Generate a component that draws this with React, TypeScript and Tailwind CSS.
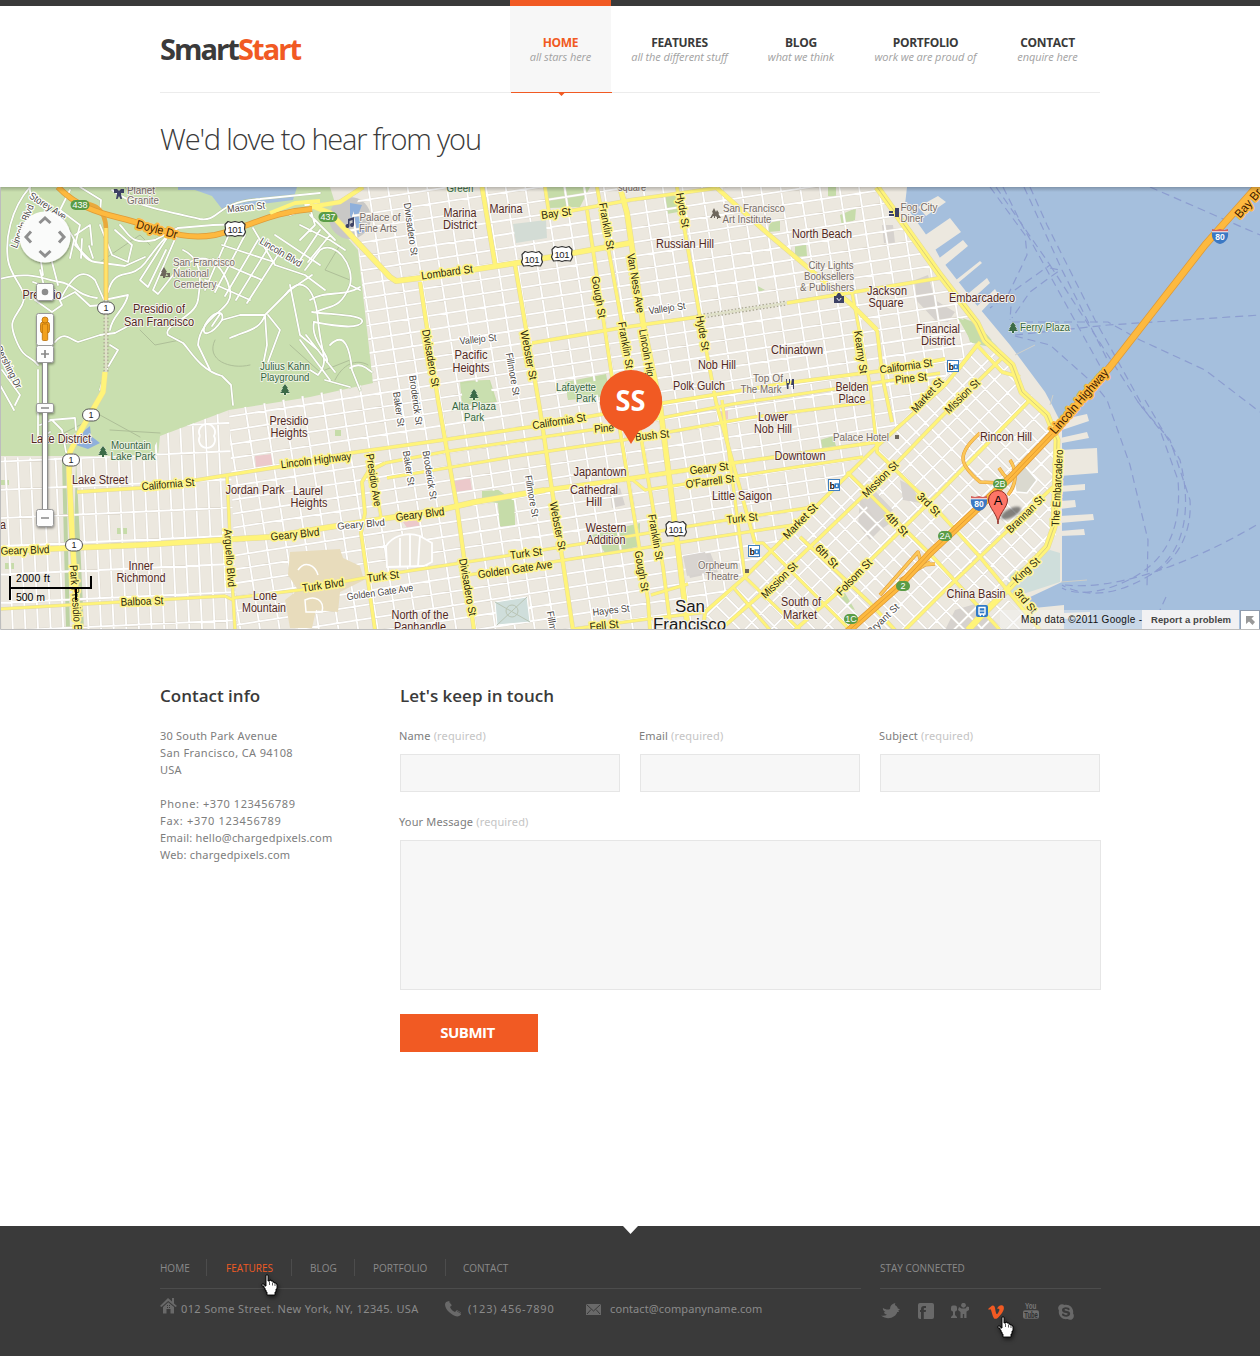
import type { ReactNode } from "react";
import { FaSkype, FaVimeoV } from "react-icons/fa";

const OPEN = "font-['Open_Sans',sans-serif]";
const LUCIDA = "font-['Noto_Sans','DejaVu_Sans',sans-serif]";

/* ---------------------------------------------------------------- map data */

const LAND = "#ece8df";
const PARK = "#c9dfaf";
const WATER = "#a5bfdd";
const YELLOW = "#fff479";

const richmond = "0,457 60,458 150,455 160,436 229,410 237,630 0,630";
const central =
  "363,187 877,187 940,272 985,335 975,349 873,450 745,577 705,612 703,630 237,630 229,410 373,383 358,245 345,235";
const soma = "980,342 992,340 1056,430 1056,540 1000,592 1040,630 703,630 705,612 745,577 873,450";

type Road = [width: number, points: string];

const yellowRoads: Road[] = [
  [4, "310,207 340,202 363,187"],
  [5, "310,205 330,213 390,277 396,281 420,278 523,262 630,243"],
  [4, "482,187 495,264"],
  [5, "620,187 627,213 643,323 660,405 672,500 688,630"],
  [3, "545,187 549,213 570,211 630,200 717,188"],
  [4, "717,188 767,233 852,305 877,330"],
  [3, "877,330 883,380 892,422"],
  [3, "677,187 700,317 716,402 755,543"],
  [3, "597,187 630,367 642,443 663,567 671,630"],
  [3, "587,210 612,377 622,443 648,600 650,630"],
  [3.5, "515,265 540,410 573,630"],
  [3.5, "420,282 438,400 457,507 474,630"],
  [3, "532,343 620,328 697,317"],
  [3, "787,303 940,278"],
  [3, "77,492 140,488 197,480 278,467 350,453 443,440 530,427 620,411 663,403 787,383 880,371 945,359"],
  [2.5, "385,463 443,452 630,424 733,404 940,373"],
  [2.5, "387,478 523,455 630,439 747,418 870,402"],
  [5, "0,551 140,545 270,537 330,527 440,510 475,502 545,490"],
  [4, "545,490 620,480 700,468"],
  [3, "700,468 877,442"],
  [2.5, "620,479 633,480 645,490 863,457"],
  [2.5, "233,598 300,590 363,578 480,560 630,536 727,520 813,507"],
  [2.5, "468,575 630,550 793,525"],
  [2.5, "227,475 231,560 235,630"],
  [3, "385,463 368,472 362,482 365,513 361,533 375,630"],
  [2.5, "370,453 382,523"],
  [5, "105,372 103,392 80,432 70,452 69,470 72,533 78,630"],
  [2.5, "0,609 120,602 225,596 233,600"],
  [2.5, "573,629 640,620 707,612"],
  [2.5, "651,595 688,584"],
  [3, "703,630 705,612 745,577 873,450 945,385 980,342"],
  [3, "720,630 760,595 887,473 943,415 1003,357"],
  [3, "795,630 837,593 940,492 1030,400"],
  [3, "1053,487 1005,533 940,595 905,630"],
  [3, "877,442 877,452 940,513 980,557 1040,630"],
  [3, "847,472 933,557 1000,630"],
  [3, "800,537 870,603 895,630"],
  [2.5, "755,543 763,543 850,630"],
  [2.5, "745,577 800,630"],
  [2.5, "733,587 770,630"],
  [2.5, "852,293 870,385 877,450"],
  [2.5, "722,400 745,577"],
  [3, "958,370 977,345 1002,372 1020,377"],
  [6, "877,187 940,275 977,323 985,340 1012,365 1022,392 1047,415 1057,440 1054,527 1047,547 1010,587 980,617 968,630"],
];

const presidioRoads = [
  "M0 279C30 270 45 280 60 282S75 295 97 298",
  "M30 187C28 205 50 207 64 224S80 260 95 262L125 266L145 257",
  "M80 187L101 200L100 214M112 190C130 205 170 212 200 219C220 222 215 202 260 199L320 193",
  "M30 187C10 210 5 240 8 260S30 290 22 305S8 320 16 340S30 355 38 365",
  "M40 270L45 290L60 300L75 292L90 306L103 305M40 255L43 275M52 262L58 285",
  "M33 282L55 290L62 305L52 312L35 300",
  "M60 300C75 270 85 270 95 280L104 300L128 295C125 310 112 315 110 330",
  "M108 292C115 265 130 282 145 263C155 250 165 235 178 228L213 225L250 224",
  "M55 342C65 330 70 340 78 342L100 335L115 333L130 325L135 325",
  "M170 233L140 280L148 287L166 250M178 232L153 290L158 294L185 260",
  "M183 250C205 260 200 285 198 300C195 318 162 325 168 335L183 343C190 350 200 370 222 376L231 385L233 405",
  "M190 262C210 250 225 270 230 290S200 315 198 345L210 370",
  "M230 232L205 290M245 235L215 292M258 240L225 296M270 245L236 300M281 250L247 303M213 259L262 280M222 245L274 262M205 280L250 300",
  "M253 228L275 265L305 275L325 290M275 235L320 265M265 315L240 315L222 320M265 315C260 330 248 330 230 338M265 315L267 345L262 370M268 315L280 330L268 362M265 315L290 290L312 275",
  "M285 295C300 275 315 285 318 320S330 360 318 375L310 370M290 285L300 335L318 350M300 340L330 380M306 335L335 372M325 380L350 387",
  "M305 270L320 250C335 240 355 265 350 285L360 290M310 300C325 290 345 297 360 287M312 312C335 315 365 315 362 322S340 327 314 322",
  "M314 322C310 340 330 355 327 362M350 285C340 310 330 305 316 312",
  "M330 345C345 330 350 350 352 370L360 390M350 368C362 360 370 372 372 372",
  "M0 355C15 360 5 375 18 385M2 370L20 395L15 405M0 385L14 410",
  "M110 345L118 350L105 372L100 390M38 370L38 440L50 432M40 425L52 420L62 430L66 452L76 455M50 420L75 418L76 430M70 190L60 210L80 225L75 245L90 260",
  "M75 235L90 225L92 245M74 240L70 258M82 239L81 258M89 246L93 258M100 225L112 255L128 262L132 245L115 230",
  "M120 225C130 235 130 245 155 240L178 228M290 215L310 208L315 225L300 240M300 225L330 240L345 250M310 215L335 240M320 230L300 260M330 235L308 262M305 205L330 203",
  "M205 325C200 338 212 335 222 320C225 308 212 312 205 325M212 326L220 314",
];

const ferryLines = [
  "M990 187L1025 235L1027 255L1008 295L990 308",
  "M996 187L1050 265L1012 292L1010 320",
  "M1003 187L1022 225L1105 375",
  "M1030 187L1047 225L1095 320L1145 410",
  "M1024 187L1062 270L1110 365",
  "M1050 265L1140 405L1170 440L1190 500C1192 530 1180 560 1150 575",
  "M1145 400L1180 460C1190 500 1190 550 1150 575S1080 595 1062 585",
  "M1138 402L1160 430L1178 480C1182 530 1165 555 1145 570S1085 600 1062 588",
  "M1012 322L1040 322L1108 322L1140 340L1205 370L1260 412",
  "M1015 335L1108 325L1260 315",
  "M1015 336L1050 345L1095 385L1107 400L1130 465L1148 540L1147 587",
  "M1150 187L1260 235",
  "M1065 585C1110 590 1180 570 1260 523",
  "M1166 597L1160 610",
  "M1050 268L1060 270L1030 292L1012 318",
];

/* ------------------------------------------------------------ map elements */

function StreetGrid({
  area,
  angle,
  origin,
  stepX,
  stepY,
}: {
  area: string;
  angle: number;
  origin: [number, number];
  stepX: number;
  stepY: number;
}) {
  const reach = 750;
  const columns = Math.ceil(reach / stepX);
  const rows = Math.ceil(reach / stepY);
  let d = "";
  for (let i = -columns; i <= columns; i++) d += `M${(i * stepX).toFixed(1)} ${-reach}V${reach}`;
  for (let i = -rows; i <= rows; i++) d += `M${-reach} ${(i * stepY).toFixed(1)}H${reach}`;
  return (
    <g clipPath={`url(#${area})`}>
      <g transform={`translate(${origin[0]} ${origin[1]}) rotate(${angle})`} fill="none">
        <path d={d} stroke="#dfdad0" strokeWidth="2.7" />
        <path d={d} stroke="#fff" strokeWidth="1.8" />
      </g>
    </g>
  );
}

type LabelKind = "place" | "poi" | "park" | "road" | "minor" | "bridge";

const labelStyle: Record<LabelKind, { fill: string; halo: string; size: number; haloWidth: number }> = {
  place: { fill: "#52291f", halo: "#f6f3ee", size: 12, haloWidth: 2 },
  poi: { fill: "#766c66", halo: "#f6f3ee", size: 11, haloWidth: 2 },
  park: { fill: "#34643f", halo: "#eef3e4", size: 11, haloWidth: 2 },
  road: { fill: "#2b2608", halo: "#fff58c", size: 11, haloWidth: 3.5 },
  minor: { fill: "#4a4643", halo: "#ffffff", size: 10, haloWidth: 2.5 },
  bridge: { fill: "#3d1a00", halo: "#fdb93f", size: 12, haloWidth: 4 },
};

/* kind, text, centre x, centre y, drawn length, rotation */
type LabelRow = [LabelKind, string, number, number, number, number?];

const labels: LabelRow[] = [
  ["minor", "Storey Ave", 48, 206, 42, 33],
  ["minor", "Lincoln Blvd", 22, 226, 46, -68],
  ["bridge", "Doyle Dr", 157, 229, 42, 15],
  ["minor", "Mason St", 246, 207, 38, -6],
  ["minor", "Lincoln Blvd", 281, 252, 47, 31],
  ["minor", "Pershing Dr", 9, 367, 46, 63],
  ["poi", "Planet", 141, 190, 28],
  ["poi", "Granite", 143, 200, 32],
  ["poi", "San Francisco", 204, 262, 62],
  ["poi", "National", 191, 273, 36],
  ["poi", "Cemetery", 195, 284, 43],
  ["place", "Presidio", 42, 295, 39],
  ["place", "Presidio of", 159, 309, 52],
  ["place", "San Francisco", 159, 322, 70],
  ["park", "Julius Kahn", 285, 366, 50],
  ["park", "Playground", 285, 377, 49],
  ["poi", "Palace of", 380, 217, 41],
  ["poi", "Fine Arts", 378, 228, 38],
  ["minor", "Divisadero St", 411, 229, 53, 82],
  ["park", "Green", 460, 188, 27],
  ["place", "Marina", 460, 213, 33],
  ["place", "District", 460, 225, 34],
  ["place", "Marina", 506, 209, 33],
  ["road", "Bay St", 556, 213, 30, -8],
  ["road", "Lombard St", 447, 272, 52, -8],
  ["road", "Franklin St", 607, 226, 47, 80],
  ["road", "Gough St", 599, 297, 42, 80],
  ["road", "Franklin St", 626, 345, 47, 80],
  ["road", "Divisadero St", 431, 358, 58, 80],
  ["road", "Webster St", 529, 355, 50, 79],
  ["minor", "Vallejo St", 478, 339, 37, -6],
  ["minor", "Fillmore St", 513, 374, 43, 80],
  ["minor", "Broderick St", 416, 400, 50, 82],
  ["minor", "Baker St", 399, 409, 35, 82],
  ["place", "Pacific", 471, 355, 33],
  ["place", "Heights", 471, 368, 37],
  ["park", "Alta Plaza", 474, 406, 44],
  ["park", "Park", 474, 417, 20],
  ["park", "Lafayette", 576, 387, 40],
  ["park", "Park", 586, 398, 20],
  ["poi", "square", 632, 187, 28],
  ["road", "Hyde St", 683, 210, 35, 80],
  ["poi", "San Francisco", 754, 208, 62],
  ["poi", "Art Institute", 747, 219, 49],
  ["place", "Russian Hill", 685, 244, 58],
  ["place", "North Beach", 822, 234, 60],
  ["poi", "City Lights", 831, 265, 45],
  ["poi", "Booksellers", 829, 276, 50],
  ["poi", "& Publishers", 827, 287, 54],
  ["place", "Jackson", 887, 291, 40],
  ["place", "Square", 886, 303, 35],
  ["road", "Van Ness Ave", 636, 283, 60, 80],
  ["minor", "Vallejo St", 667, 308, 37, -8],
  ["road", "Lincoln Hig", 647, 353, 48, 80],
  ["road", "Hyde St", 703, 333, 35, 80],
  ["place", "Chinatown", 797, 350, 52],
  ["place", "Nob Hill", 717, 365, 38],
  ["place", "Polk Gulch", 699, 386, 52],
  ["poi", "Top Of", 768, 378, 30],
  ["poi", "The Mark", 761, 389, 41],
  ["road", "Kearny St", 861, 352, 43, 82],
  ["place", "Belden", 852, 387, 33],
  ["place", "Place", 852, 399, 27],
  ["place", "Financial", 938, 329, 44],
  ["place", "District", 938, 341, 34],
  ["road", "California St", 906, 366, 53, -8],
  ["road", "Pine St", 911, 378, 32, -6],
  ["road", "Market St", 927, 395, 42, -48],
  ["road", "Mission St", 962, 396, 44, -44],
  ["poi", "Fog City", 919, 207, 37],
  ["poi", "Diner", 912, 218, 23],
  ["place", "Embarcadero", 982, 298, 66],
  ["park", "Ferry Plaza", 1045, 327, 50],
  ["bridge", "Bay Br", 1248, 203, 34, -49],
  ["bridge", "Lincoln Highway", 1079, 401, 82, -49],
  ["place", "Lake District", 61, 439, 60],
  ["park", "Mountain", 131, 445, 40],
  ["park", "Lake Park", 133, 456, 45],
  ["place", "Lake Street", 100, 480, 56],
  ["road", "California St", 168, 484, 53, -5],
  ["place", "Presidio", 289, 421, 39],
  ["place", "Heights", 289, 433, 37],
  ["road", "Lincoln Highway", 316, 460, 71, -7],
  ["place", "Jordan Park", 255, 490, 59],
  ["place", "Laurel", 308, 491, 30],
  ["place", "Heights", 309, 503, 37],
  ["place", "a", 3, 525, 6],
  ["road", "Geary Blvd", 25, 550, 49, -2],
  ["road", "Geary Blvd", 295, 534, 49, -6],
  ["road", "Arguello Blvd", 230, 558, 58, 86],
  ["road", "Park Presidio B", 76, 598, 66, 86],
  ["place", "Inner", 141, 566, 25],
  ["place", "Richmond", 141, 578, 49],
  ["road", "Balboa St", 142, 601, 43, -2],
  ["place", "Lone", 265, 596, 24],
  ["place", "Mountain", 264, 608, 44],
  ["road", "Turk Blvd", 323, 585, 42, -8],
  ["road", "Turk St", 383, 576, 32, -7],
  ["minor", "Golden Gate Ave", 380, 592, 67, -8],
  ["place", "North of the", 420, 615, 57],
  ["place", "Panhandle", 420, 627, 52],
  ["road", "Presidio Ave", 374, 480, 53, 81],
  ["minor", "Baker St", 409, 468, 35, 81],
  ["minor", "Broderick St", 430, 475, 49, 81],
  ["minor", "Geary Blvd", 361, 524, 48, -5],
  ["road", "Geary Blvd", 420, 514, 49, -7],
  ["road", "Divisadero St", 468, 587, 58, 80],
  ["minor", "Fillmore St", 532, 496, 42, 80],
  ["road", "Webster St", 558, 526, 49, 79],
  ["road", "California St", 559, 421, 54, -9],
  ["road", "Pine", 604, 428, 20, -5],
  ["place", "Japantown", 600, 472, 53],
  ["place", "Cathedral", 594, 490, 48],
  ["place", "Hill", 594, 502, 16],
  ["place", "Western", 606, 528, 41],
  ["place", "Addition", 606, 540, 39],
  ["road", "Turk St", 526, 553, 32, -7],
  ["road", "Golden Gate Ave", 515, 569, 75, -8],
  ["minor", "Hayes St", 611, 610, 37, -7],
  ["road", "Fell St", 604, 625, 29, -6],
  ["minor", "Fillm", 552, 621, 20, 80],
  ["road", "Bush St", 652, 435, 34, -6],
  ["place", "Lower", 773, 417, 30],
  ["place", "Nob Hill", 773, 429, 38],
  ["poi", "Palace Hotel", 861, 437, 56],
  ["place", "Downtown", 800, 456, 51],
  ["road", "Geary St", 709, 468, 39, -7],
  ["road", "O'Farrell St", 710, 481, 49, -7],
  ["place", "Little Saigon", 742, 496, 60],
  ["road", "Turk St", 742, 518, 31, -6],
  ["road", "Franklin St", 656, 537, 46, 80],
  ["road", "Gough St", 642, 571, 41, 80],
  ["road", "Market St", 800, 521, 44, -46],
  ["road", "Mission St", 880, 479, 46, -45],
  ["road", "Mission St", 779, 580, 46, -45],
  ["road", "3rd St", 929, 504, 28, 45],
  ["road", "4th St", 897, 524, 28, 46],
  ["road", "6th St", 827, 556, 28, 46],
  ["road", "Folsom St", 854, 577, 46, -46],
  ["poi", "Orpheum", 718, 565, 40],
  ["poi", "Theatre", 722, 576, 33],
  ["place", "South of", 801, 602, 40],
  ["place", "Market", 800, 615, 34],
  ["minor", "Bryant St", 883, 619, 40, -44],
  ["road", "Brannan St", 1025, 514, 48, -45],
  ["road", "The Embarcadero", 1057, 488, 77, -87],
  ["road", "King St", 1026, 570, 32, -43],
  ["road", "3rd St", 1026, 601, 28, 50],
  ["place", "Rincon Hill", 1006, 437, 52],
  ["place", "China Basin", 976, 594, 59],
];

function MapLabel({ row }: { row: LabelRow }) {
  const [kind, text, x, y, length, angle = 0] = row;
  const style = labelStyle[kind];
  return (
    <text
      transform={`translate(${x} ${y}) rotate(${angle})`}
      dy={style.size * 0.36}
      textAnchor="middle"
      textLength={length}
      lengthAdjust="spacingAndGlyphs"
      fontSize={style.size}
      fill={style.fill}
      stroke={style.halo}
      strokeWidth={style.haloWidth}
      strokeLinejoin="round"
      paintOrder="stroke"
    >
      {text}
    </text>
  );
}

function TreeIcon({ x, y }: { x: number; y: number }) {
  return (
    <path
      transform={`translate(${x} ${y})`}
      d="M0-5L3-1H2L4 2H3L5 4H1V6H-1V4H-5L-3 2H-4L-2-1H-3Z"
      fill="#3c6b48"
      stroke="#eef3e4"
      strokeWidth="1"
      paintOrder="stroke"
    />
  );
}

function UsShield({ x, y }: { x: number; y: number }) {
  return (
    <g transform={`translate(${x} ${y})`}>
      <path
        d="M-7-7.500L-4-6.500L0-7.500L4-6.500L7-7.500L10-4.500L9.500 0L10.500 3L8.500 7L3 6.500L0 7.500L-3 6.500L-8.500 7L-10.500 3L-9.500 0L-10-4.500Z"
        fill="#fff"
        stroke="#333"
        strokeWidth="1.2"
        strokeLinejoin="round"
      />
      <text y="3.500" textAnchor="middle" fontSize="9.500" textLength="15" fill="#222">
        101
      </text>
    </g>
  );
}

function RouteOne({ x, y }: { x: number; y: number }) {
  return (
    <g transform={`translate(${x} ${y})`}>
      <rect x="-8.500" y="-6" width="17" height="12" rx="6" fill="#fff" stroke="#555" strokeWidth="1" />
      <text y="3.300" textAnchor="middle" fontSize="9" fill="#222">
        1
      </text>
    </g>
  );
}

function ExitBadge({ x, y, text }: { x: number; y: number; text: string }) {
  const half = text.length > 2 ? 9.5 : 7;
  return (
    <g transform={`translate(${x} ${y})`}>
      <rect x={-half} y="-5" width={half * 2} height="10" rx="5" fill="#5a9c46" />
      <text y="3.200" textAnchor="middle" fontSize="9" fill="#fff">
        {text}
      </text>
    </g>
  );
}

function InterstateShield({ x, y }: { x: number; y: number }) {
  return (
    <g transform={`translate(${x} ${y})`}>
      <path d="M-8-7L-4-6L0-7L4-6L8-7V-3H-8Z" fill="#d4605c" />
      <path d="M-8-4H8C9 3 5 7 0 8C-5 7-9 3-8-4Z" fill="#3b78c3" />
      <path d="M-8-4.200H8" stroke="#fff" strokeWidth="1" />
      <text y="4" textAnchor="middle" fontSize="8.500" fontWeight="bold" fill="#fff">
        80
      </text>
    </g>
  );
}

function TransitBadge({ x, y }: { x: number; y: number }) {
  return (
    <g transform={`translate(${x} ${y})`}>
      <rect x="-5.500" y="-5.500" width="11" height="11" fill="#fff" stroke="#3f7fc0" />
      <text x="-4.500" y="3.500" fontSize="9" fontWeight="bold" fill="#111">
        b
      </text>
      <rect x="1.300" y="-1" width="3" height="3.600" fill="none" stroke="#2f7cc4" strokeWidth="1.400" />
    </g>
  );
}

function MapControls() {
  return (
    <g>
      <g filter="url(#controlShadow)">
        <circle cx="45" cy="237" r="25.500" fill="#fff" fillOpacity=".94" />
        <rect x="42.500" y="360" width="5" height="152" fill="#fff" stroke="#8d8d8d" strokeWidth="1" />
        <rect x="36.500" y="283.500" width="17" height="17" rx="2" fill="#fdfdfd" stroke="#999" />
        <rect x="36.500" y="313.500" width="17" height="32" rx="2" fill="#fdfdfd" stroke="#999" />
        <rect x="36.500" y="345.500" width="17" height="17" rx="2" fill="#fdfdfd" stroke="#999" />
        <rect x="36.500" y="403.500" width="17" height="9" rx="1.500" fill="#fdfdfd" stroke="#999" />
        <rect x="36.500" y="509.500" width="17" height="17" rx="2" fill="#fdfdfd" stroke="#999" />
      </g>
      <path
        d="M39.500 223L45 218L50.500 223M39.500 251L45 256L50.500 251M31 231.500L26 237L31 242.500M59 231.500L64 237L59 242.500"
        fill="none"
        stroke="#8f8f8f"
        strokeWidth="3"
      />
      <circle cx="45" cy="292" r="3.300" fill="#8d8d8d" />
      <path d="M41 354H49M45 350V358M41 408H49M41 518H49" stroke="#888" strokeWidth="1.700" />
      <g fill="#f2a11d" stroke="#b86f08" strokeWidth=".8">
        <rect x="40.500" y="322" width="9" height="11" rx="2.500" />
        <rect x="42.300" y="324" width="5.400" height="16.500" rx="1" />
        <circle cx="45" cy="320" r="3" />
      </g>
    </g>
  );
}

function MapMarkers() {
  return (
    <g>
      <ellipse cx="1011" cy="513" rx="11" ry="4.500" transform="rotate(-27 1011 513)" fill="#3a3a3a" opacity=".6" filter="url(#soft)" />
      <path
        d="M998 524C998 514 988.500 508 988.500 500A9.500 9.500 0 0 1 1007.500 500C1007.500 508 998 514 998 524Z"
        fill="#fd7567"
        stroke="#8e2c23"
        strokeWidth="1"
      />
      <text x="998" y="505" textAnchor="middle" fontSize="13" fill="#000">
        A
      </text>
      <path d="M631 370A31 31 0 0 1 639 431L631 444L623 431A31 31 0 0 1 631 370Z" fill="#f15a23" />
      <text
        x="630.500"
        y="411"
        textAnchor="middle"
        textLength="30"
        lengthAdjust="spacingAndGlyphs"
        fontSize="29"
        fontWeight="bold"
        fill="#fff"
        className="font-['Open_Sans',sans-serif]"
      >
        SS
      </text>
    </g>
  );
}

function CityMap() {
  return (
    <svg
      viewBox="0 187 1260 443"
      width="1260"
      height="443"
      className="block font-['Liberation_Sans',Arial,sans-serif]"
      role="img"
      aria-label="Map of San Francisco"
    >
      <defs>
        <clipPath id="richmond">
          <polygon points={richmond} />
        </clipPath>
        <clipPath id="central">
          <polygon points={central} />
        </clipPath>
        <clipPath id="soma">
          <polygon points={soma} />
        </clipPath>
        <filter id="controlShadow" x="-50%" y="-20%" width="200%" height="140%">
          <feDropShadow dx="0.5" dy="1.500" stdDeviation="1.200" floodOpacity=".4" />
        </filter>
        <filter id="soft">
          <feGaussianBlur stdDeviation="1.200" />
        </filter>
        <linearGradient id="topShade" x1="0" x2="0" y1="0" y2="1">
          <stop offset="0" stopColor="#000" stopOpacity=".22" />
          <stop offset="1" stopColor="#000" stopOpacity="0" />
        </linearGradient>
      </defs>

      <rect y="187" width="1260" height="443" fill={WATER} />

      {/* mainland and piers */}
      <path
        d="M0 187H907L905 205L932 243L940 258L975 303L1010 345L1045 392L1052 405L1062 425V582L1028 598L1034 608L1064 605V630H0Z"
        fill={LAND}
      />
      <path
        d="M918 207L938 196L946 202L926 216ZM918 240L950 218L961 232L932 252ZM938 259L963 240L968 246L944 266ZM956 280L980 261L982 263L958 283ZM964 297L987 278L990 283L969 302ZM973 310L995 289L998 294L978 315Z"
        fill={LAND}
      />
      <path
        d="M1060 420L1087 414L1089 421L1062 430ZM1060 438L1087 432L1089 438L1062 443ZM1060 450L1097 448L1098 473L1060 476ZM1060 486L1085 484V490L1060 492ZM1060 501L1075 500L1076 507L1060 509ZM1060 516L1093 514L1094 520L1060 523ZM1060 531L1084 529L1085 535L1060 536ZM1064 613L1090 612V617L1064 619Z"
        fill={LAND}
      />
      <path d="M1061 582L1087 580M1050 405L1053 395M1015 355L1035 345" stroke="#cfcfc8" strokeWidth="1" />

      {/* parks */}
      <path d="M0 187H330L345 235L358 250L373 383L310 397L229 410L160 436L158 456H60L0 456Z" fill={PARK} />
      <path d="M178 187H297L293 200L222 209L212 196L195 190H178Z" fill={WATER} />
      <path d="M90 426L91 436L100 443L88 449L76 445L80 434Z" fill="#8fb0db" />
      <circle cx="350" cy="218" r="21" fill="#c9c8c6" />
      <path d="M350 203L362 205L358 215L364 232L358 234L350 215Z" fill="#8fb0db" />
      <path
        d="M545 187H590L580 207L549 208ZM460 381L490 380L497 402L462 405ZM565 382L606 374L610 396L568 400ZM482 491L498 490L514 500L515 525L500 527L498 500L482 502ZM592 535L640 523V546L606 554ZM665 195L677 194L678 212L667 214ZM770 222L780 220V231L768 232ZM795 246L806 243L807 256L795 257ZM840 215L856 208L855 220L842 226ZM828 187H836V196H828ZM756 285L765 290L756 293ZM820 440L833 436L836 446L822 448ZM963 318L978 324L1000 350L987 345L970 342ZM852 384L868 383V392H852ZM838 595L845 593L855 610L848 608ZM0 480H9V485H0ZM5 563H14V569H5ZM117 528H127V534H117ZM335 430H341V436H335Z"
        fill="#c6dca9"
      />
      <path d="M62 460L66 460L70 630H66ZM76 460L80 540L84 630H81L74 540Z" fill="#bdd3a4" />
      <path d="M1010 575L1050 550L1060 553L1060 582L1020 595L1005 590Z" fill="#cfdedb" />
      <path d="M454 481L470 478L472 490L456 492ZM403 522L418 519L422 527L408 529ZM255 456L272 454L273 466L256 467ZM717 412L728 410V419L719 421Z" fill="#ecc9cb" />
      <path d="M860 500L872 497L895 520L880 530L870 540L858 525ZM683 556L710 552L718 572L690 578ZM915 280L928 275L935 300L955 312L948 322L935 320L916 300ZM610 492L620 488L625 505L612 508ZM955 610L975 604L1000 630H945ZM882 225H893L895 243H884Z" fill="#d6d2ce" />

      <StreetGrid area="richmond" angle={-2.6} origin={[72, 543]} stepX={12.6} stepY={28.2} />
      <StreetGrid area="central" angle={-8.8} origin={[457, 507]} stepX={19.4} stepY={13.8} />
      <StreetGrid area="soma" angle={-45} origin={[875, 447]} stepX={13.2} stepY={18.5} />

      {/* blocks that interrupt the street grid */}
      <path d="M484 492L498 490L514 501L515 525L500 526L498 503L484 502Z" fill="#c6dca9" />
      <path d="M461 384L489 380L494 401L463 404ZM566 386L606 379L609 393L568 399Z" fill={PARK} />
      <path d="M513 224L546 220L547 238L516 243Z" fill="#d3dcd5" />
      <path d="M495 602L527 597L530 622L497 625Z" fill="#cfdedb" stroke="#fff" />
      <path d="M495 602L530 622M527 597L497 625" stroke="#b9c4b4" />
      <circle cx="512" cy="611" r="6" fill="none" stroke="#b9c4b4" />
      <path d="M290 552L340 549L343 558L360 566L364 580L340 592L338 612L316 610L312 628H290L285 600L298 590L288 575Z" fill="#e8dcbc" />
      <path d="M298 570C305 560 315 565 318 575M305 600C315 595 325 600 322 612H306Z" fill="none" stroke="#fff" strokeWidth="1.500" />
      <path d="M862 500L876 492L893 510L878 522ZM900 480L913 487L920 503L903 500ZM683 556L705 552L712 572L687 576Z" fill="#d8d4d0" />
      <path d="M1012 473L1025 466L1037 480L1027 493L1016 492Z" fill="#dad9cf" stroke="#fff" strokeWidth="1.500" />
      <path d="M958 318L978 325L1000 350L990 347L972 343Z" fill="#c6dca9" />
      <path
        d="M386 546C392 537 405 531 420 536L432 543V562L424 566L387 567ZM400 538V566M410 534V566M420 536L418 566"
        fill={LAND}
        stroke="#fff"
        strokeWidth="1.800"
      />
      <path d="M200 436A8 8 0 1 1 214 436A8 8 0 1 1 200 436" fill="none" stroke="#fff" strokeWidth="1.800" />

      {/* park roads */}
      <g fill="none" strokeLinecap="round" strokeLinejoin="round">
        <path d="M125 187L140 205M100 262L140 235L150 245M140 330L155 345L180 340M215 340C205 360 230 370 250 365M290 345L320 372L350 360M60 435L100 415L140 437M110 430L160 433M340 245L325 270L350 280M335 380C345 360 360 360 368 365" stroke="#aebf98" strokeWidth="1" />
        {presidioRoads.map((d) => (
          <path key={d} d={d} stroke="#b3c49c" strokeWidth="2.700" />
        ))}
        {presidioRoads.map((d) => (
          <path key={d} d={d} stroke="#fff" strokeWidth="1.800" />
        ))}
        <path d="M106 300V372M697 317L787 303" stroke="#a9a690" strokeWidth="5" strokeDasharray="1.500 2" strokeLinecap="butt" />
        <path d="M106 300V372M697 317L787 303" stroke="#dfe0c8" strokeWidth="2.500" strokeLinecap="butt" />
      </g>

      {/* ferry routes */}
      <g fill="none" stroke="#8c9dd0" strokeWidth="1.200" strokeDasharray="8 5">
        {ferryLines.map((d) => (
          <path key={d} d={d} />
        ))}
      </g>

      {/* arterial roads */}
      <g fill="none" strokeLinejoin="round">
        {yellowRoads.map(([width, points]) => (
          <polyline key={points} points={points} stroke="#e2d9a0" strokeWidth={width + 1} />
        ))}
        {yellowRoads.map(([width, points]) => (
          <polyline key={points} points={points} stroke={YELLOW} strokeWidth={width} />
        ))}
        <polyline points="877,187 940,275 977,323 985,340 1012,365 1022,392 1047,415 1057,440 1054,527 1047,547 1010,587" stroke="#d9cf7a" strokeWidth="1" />
      </g>

      {/* freeways */}
      <g fill="none" strokeLinejoin="round">
        <path d="M106 300V230C106 205 90 203 75 202" stroke="#e9a93c" strokeWidth="4.500" />
        <path d="M106 300V228" stroke="#ffe36b" strokeWidth="3.500" />
        <path d="M58 187C75 205 95 212 120 218C160 228 180 241 215 235C250 227 270 212 312 209" stroke="#df9a36" strokeWidth="6" />
        <path d="M58 187C75 205 95 212 120 218C160 228 180 241 215 235C250 227 270 212 312 209" stroke="#fdb93f" strokeWidth="4.500" />
        <path d="M270 213L295 203L320 201" stroke={YELLOW} strokeWidth="4" />
        <path d="M980 433C955 455 960 465 980 482L1000 483M999 468C1005 478 1010 480 1010 482M1010 460C1018 472 1016 485 1008 495M880 595L918 552L922 565L935 564M930 562L900 580" stroke="#df9a36" strokeWidth="3.500" />
        <path d="M980 433C955 455 960 465 980 482L1000 483M999 468C1005 478 1010 480 1010 482M1010 460C1018 472 1016 485 1008 495M880 595L918 552L922 565L935 564M930 562L900 580" stroke="#fdc757" strokeWidth="2.500" />
        <path d="M1260 183L1205 245L1110 367L1053 433L1010 478L930 553L900 585L845 634" stroke="#df9a36" strokeWidth="7.500" />
        <path d="M1260 183L1205 245L1110 367L1053 433L1010 478L930 553L900 585L845 634" stroke="#fdb93f" strokeWidth="6" />
        <path d="M1053 433L1010 478L930 553L900 585L845 634" stroke="#e39d33" strokeWidth="1" />
      </g>

      {labels.map((row, i) => (
        <MapLabel key={i} row={row} />
      ))}

      <g fill="#1b1b1b" stroke="#f6f3ee" strokeWidth="2.500" paintOrder="stroke" fontSize="16">
        <text x="675" y="612" textLength="30" lengthAdjust="spacingAndGlyphs">
          San
        </text>
        <text x="653" y="630" textLength="73" lengthAdjust="spacingAndGlyphs">
          Francisco
        </text>
      </g>

      {/* places of interest */}
      <TreeIcon x={285} y={389} />
      <TreeIcon x={103} y={451} />
      <TreeIcon x={474} y={394} />
      <TreeIcon x={1013} y={327} />
      <g fill="#6d665c">
        <path d="M164 267L167 272H166L168 276H165V278H163V276H160L162 272H161ZM165 277H170V273H167Z" />
        <path d="M714 208L716 212L717 210L719 213L718.500 214L721 218H718V219H717V217L715 216V218H714V216L712 217V218H710L713 213L712 212Z" />
        <rect x="895" y="435" width="4" height="4" />
        <rect x="745" y="569" width="4" height="4" />
      </g>
      <g fill="#3d4265">
        <path d="M889 211H893V213H889ZM889 214H894V216H889ZM895 208H899V217H895ZM786 379H787V383H789V379H790V383L788.500 385V389H787ZM792 379H794V389H793V385H791Z" />
        <path d="M834 296H836L838 293H840L842 296H844V303H834Z" />
        <path d="M837 298C838 301 840 301 841 298" fill="none" stroke="#fff" strokeWidth="1" />
        <path d="M348 219L354 217V225A2 2 0 1 1 352.500 223V220L349.500 221V226A2 2 0 1 1 348 224Z" />
        <path d="M114 189H117L119 191L121 189H124V193H121V194L122 199H120.500L119 196L117.500 199H116L117 194V193H114Z" />
      </g>
      <UsShield x={235} y={229} />
      <UsShield x={532} y={259} />
      <UsShield x={562} y={254} />
      <UsShield x={676} y={529} />
      <RouteOne x={106} y={308} />
      <RouteOne x={91} y={415} />
      <RouteOne x={71} y={460} />
      <RouteOne x={74} y={545} />
      <ExitBadge x={80} y={205} text="438" />
      <ExitBadge x={328} y={217} text="437" />
      <ExitBadge x={1000} y={484} text="2B" />
      <ExitBadge x={945} y={536} text="2A" />
      <ExitBadge x={903} y={586} text="2" />
      <ExitBadge x={851} y={619} text="1C" />
      <InterstateShield x={1220} y={236} />
      <InterstateShield x={979} y={503} />
      <TransitBadge x={953} y={366} />
      <TransitBadge x={834} y={485} />
      <TransitBadge x={754} y={551} />
      <rect x="976" y="605" width="12" height="12" rx="2" fill="#2f79c6" />
      <path d="M979 607.500H985V614H979ZM980 616L981 614M984 616L983 614" fill="none" stroke="#fff" strokeWidth="1.400" />
      <path d="M979.500 611H984.500" stroke="#fff" strokeWidth="1" />

      <MapControls />

      {/* scale bar */}
      <path d="M10 576V600M9 588H92M91 576V588M76 588V600" stroke="#000" strokeWidth="2" fill="none" />
      <g fontSize="10.500" fill="#000">
        <text x="16" y="582" textLength="34">
          2000 ft
        </text>
        <text x="16" y="601" textLength="29">
          500 m
        </text>
      </g>

      {/* attribution */}
      <rect x="1000" y="610" width="142" height="20" fill="#f3f3f3" opacity=".45" />
      <rect x="1142" y="610" width="97" height="20" fill="#f1f1f3" />
      <text x="1021" y="623" fontSize="10" textLength="121" fill="#111">
        Map data ©2011 Google -
      </text>
      <text x="1151" y="623" fontSize="9.500" fontWeight="bold" textLength="80" fill="#444">
        Report a problem
      </text>
      <rect x="1240.500" y="610.500" width="19" height="19" fill="#fff" stroke="#8f9cae" />
      <path d="M1246 616H1254L1251.500 618.500L1255 622L1252.500 625L1249 621.500L1246 624Z" fill="#999" />

      <MapMarkers />

      <rect y="187" width="1260" height="5" fill="url(#topShade)" />
      <path d="M.5 187V629.500H1260" fill="none" stroke="#bdbdbd" />
    </svg>
  );
}

/* ------------------------------------------------------------------ header */

const navItems = [
  { title: "HOME", note: "all stars here", box: "w-[101px]", active: true },
  { title: "FEATURES", note: "all the different stuff", box: "w-[137px]" },
  { title: "BLOG", note: "what we think", box: "w-[106px]" },
  { title: "PORTFOLIO", note: "work we are proud of", box: "w-[143px]" },
  { title: "CONTACT", note: "enquire here", box: "w-[101px]" },
];

function Header() {
  return (
    <header className="border-t-[6px] border-[#3a3a3a]">
      <div className="mx-auto flex h-[87px] w-[940px] border-b border-[#ececec]">
        <div className="w-[350px] pt-[22px] text-[29px] leading-[42px] font-bold tracking-[-1.95px] text-[#3a3a3a]">
          Smart<span className="text-[#f15a23]">Start</span>
        </div>
        <nav className="flex">
          {navItems.map((item) => (
            <a
              key={item.title}
              className={`relative -mt-[6px] h-[92px] pt-[36px] text-center whitespace-nowrap ${item.box} ${
                item.active ? "border-t-[6px] border-[#f15a23] bg-[#f7f7f7] pt-[30px]!" : ""
              }`}
            >
              <span
                className={`block text-[12px] leading-[14px] font-bold tracking-[-0.3px] ${
                  item.active ? "text-[#f15a23]" : "text-[#3a3a3a]"
                }`}
              >
                {item.title}
              </span>
              <span className="block text-[11px] leading-[14px] tracking-[-0.1px] text-[#a2a2a2] italic">{item.note}</span>
              {item.active && (
                <svg width="101" height="5" viewBox="0 0 101 5" className="absolute top-[86px] left-px" fill="#f15a23">
                  <path d="M0 0H101V1H53.500L50.500 4L47.500 1H0Z" />
                </svg>
              )}
            </a>
          ))}
        </nav>
      </div>
      <h1 className="mx-auto h-[94px] w-[940px] pt-[25px] text-[29px] leading-[42px] font-light tracking-[-1.18px] text-[#3a3a3a]">
        We'd love to hear from you
      </h1>
    </header>
  );
}

/* ----------------------------------------------------------------- content */

function FieldLabel({ children }: { children: ReactNode }) {
  return (
    <span className={`-ml-px block text-[11px] leading-[17px] tracking-[0.15px] text-[#7d7d7d] ${LUCIDA}`}>
      {children} <span className="text-[#c4c4c4]">(required)</span>
    </span>
  );
}

function ContactSection() {
  return (
    <main className="mx-auto flex h-[596px] w-[940px] pt-[54px]">
      <section className="w-[240px] shrink-0">
        <h2 className="text-[17px] leading-6 font-semibold text-[#3a3a3a]">Contact info</h2>
        <address className={`mt-[19px] text-[11px] leading-[17px] text-[#7d7d7d] not-italic ${LUCIDA}`}>
          <p className="tracking-[0.2px]">30 South Park Avenue</p>
          <p className="tracking-[0.38px]">San Francisco, CA 94108</p>
          <p className="tracking-[0.2px]">USA</p>
          <p className="mt-[17px] tracking-[0.57px]">Phone: +370 123456789</p>
          <p className="tracking-[0.7px]">Fax: +370 123456789</p>
          <p className="tracking-[0.2px]">Email: hello@chargedpixels.com</p>
          <p className="tracking-[0.2px]">Web: chargedpixels.com</p>
        </address>
      </section>
      <section className="w-[701px] shrink-0">
        <h2 className="text-[17px] leading-6 font-semibold text-[#3a3a3a]">Let's keep in touch</h2>
        <div className="mt-[19px] flex gap-5">
          {["Name", "Email", "Subject"].map((name) => (
            <label key={name} className="w-[220px]">
              <FieldLabel>{name}</FieldLabel>
              <input className="mt-[10px] block h-[38px] w-[220px] border border-[#e6e6e6] bg-[#f7f7f7]" />
            </label>
          ))}
        </div>
        <label className="mt-[21px] block">
          <FieldLabel>Your Message</FieldLabel>
          <textarea className="mt-[10px] block h-[150px] w-[701px] resize-none border border-[#e6e6e6] bg-[#f7f7f7]" />
        </label>
        <button className="mt-6 block h-[38px] w-[138px] bg-[#f15a23] pr-[3px] pb-[2px] text-[15px] font-bold tracking-[-0.5px] text-white">
          SUBMIT
        </button>
      </section>
    </main>
  );
}

/* ------------------------------------------------------------------ footer */

function HandCursor({ place }: { place: string }) {
  return (
    <svg
      width="17"
      height="22"
      viewBox="0 0 17 22"
      className={`absolute drop-shadow-[1px_2px_2px_rgba(0,0,0,0.6)] ${place}`}
    >
      <path
        d="M5 1H7V7H9V6H10V7H12V8H13V9H15V10H16V15H15V18H14V21H6V18H5V16H4V14H3V12H1V10H3V11H4V12H5Z"
        fill="#fff"
        stroke="#000"
        strokeWidth=".9"
      />
      <path d="M8.500 8V11M11.500 8.500V11.500M14 10V12" stroke="#333" strokeWidth=".8" />
    </svg>
  );
}

function HouseIcon() {
  return (
    <svg width="17" height="16" viewBox="0 0 17 16" fill="#696969">
      <path d="M8 0L12 3.500V0H14V5.500L17 8L15.500 9L8.200 3L1.500 9L0 8Z" />
      <path d="M3 9L8.200 4.300L14 9V15.500H10.500V11H6.500V15.500H3Z" />
      <path d="M7 7H8V8H7ZM9 7H10V8H9ZM7 9H8V10H7ZM9 9H10V10H9Z" fill="#3a3a3a" />
    </svg>
  );
}

function PhoneIcon() {
  return (
    <svg width="17" height="16" viewBox="0 0 17 16" fill="#696969">
      <path d="M1 1L4 0L7 4L5 6C6 8.500 8 10.500 10 11L12 9L16 11.500V13.500C14 16 11 16 8 14C3 11 0 7 0 3Z" />
      <path d="M4.500 1L7.500 4.500M12 10L16 12.500" stroke="#3a3a3a" strokeWidth=".7" />
    </svg>
  );
}

function MailIcon() {
  return (
    <svg width="15" height="11" viewBox="0 0 15 11">
      <path d="M0 0H15V11H0Z" fill="#696969" />
      <path d="M.5.500L7.500 7L14.500.500M1 10L5 5.500M14 10L10 5.500" fill="none" stroke="#3a3a3a" strokeWidth="1" />
    </svg>
  );
}

function TwitterIcon() {
  return (
    <svg width="19" height="16" viewBox="0 0 19 16" fill="#696969">
      <path d="M0 12.500C2.500 13 4.500 12.500 6 11.800C4 11.500 3 10.300 3 9.300L4.500 9C2.500 8 1.500 6.500 2 5C4.500 6.500 7 7 9 6C9 2.500 11 .5 14.500 0C13.700 1 13.800 1.800 14.500 2.500C15.800 3 16.500 4.300 16.800 5.500L19 6.300L17.300 7.500L18 9L16.300 9C15 14 7 18 0 12.500Z" />
    </svg>
  );
}

function FacebookIcon() {
  return (
    <svg width="16" height="16" viewBox="0 0 16 16">
      <rect width="16" height="16" rx="2" fill="#696969" />
      <path d="M3 16V9H2V7H3V6C3 4 4 3 6 3H8V5H6.700C6 5 5.800 5.300 5.800 6V7H8L7.700 9H5.800V16Z" fill="#3a3a3a" />
    </svg>
  );
}

function PeopleIcon() {
  return (
    <svg width="18" height="15" viewBox="0 0 18 15" fill="#696969">
      <rect y="2.500" width="6" height="6" rx="2" />
      <path d="M2 8H4V12L6 14V15H0V14L2 12Z" />
      <circle cx="12.500" cy="2.300" r="2.400" />
      <path d="M8 4L10.500 5.500H14.500L16 3.500L18 4V7L15.500 8.500V15H13.200V11H11.800V15H9.500V9L7 7Z" />
    </svg>
  );
}

function YouTubeIcon() {
  return (
    <svg width="16" height="16" viewBox="0 0 16 16" className="font-['Liberation_Sans',sans-serif]">
      <text x="2" y="6.300" fontSize="8.500" fontWeight="bold" textLength="11.500" lengthAdjust="spacingAndGlyphs" fill="#787878">
        You
      </text>
      <rect y="7.300" width="16" height="8.500" rx="2" fill="#6e6e6e" />
      <text x="1.300" y="14.600" fontSize="8.500" fontWeight="bold" textLength="13.500" lengthAdjust="spacingAndGlyphs" fill="#2f2f2f">
        Tube
      </text>
    </svg>
  );
}

const footerLinks = [
  { text: "HOME", box: "w-[47px]" },
  { text: "FEATURES", box: "w-[85px] pl-[19px]", active: true },
  { text: "BLOG", box: "w-[63px] pl-[18px]" },
  { text: "PORTFOLIO", box: "w-[91px] pl-[18px]" },
  { text: "CONTACT", box: "w-[70px] pl-[17px]" },
];

function Footer() {
  return (
    <footer className="relative h-[130px] bg-[#3a3a3a] text-[#8a8a8a]">
      <svg width="15" height="8" viewBox="0 0 15 8" className="absolute top-0 left-[623px]" fill="#fff">
        <path d="M0 0H15L7.500 8Z" />
      </svg>
      <div className="mx-auto flex w-[940px] gap-[19px] pt-[33px]">
        <div className="w-[701px] shrink-0">
          <div className="flex h-[30px] border-b border-[#4c4c4c] text-[10px] leading-[19px]">
            {footerLinks.map((link, i) => (
              <a
                key={link.text}
                className={`relative h-[17px] ${link.box} ${i < 4 ? "border-r border-[#4c4c4c]" : ""} ${
                  link.active ? "text-[#f15a23]" : ""
                }`}
              >
                {link.text}
                {link.active && <HandCursor place="left-[54px] top-[15px]" />}
              </a>
            ))}
          </div>
          <div className={`flex text-[11px] ${LUCIDA}`}>
            <span className="flex w-[285px] gap-1 pt-[9px]">
              <HouseIcon />
              <span className="pt-[2px] leading-[17px] tracking-[0.36px]">012 Some Street. New York, NY, 12345. USA</span>
            </span>
            <span className="flex w-[141px] gap-[6px] pt-[11px]">
              <span className="pt-px">
                <PhoneIcon />
              </span>
              <span className="leading-[17px] tracking-[0.75px]">(123) 456-7890</span>
            </span>
            <span className="flex gap-[9px] pt-[11px]">
              <span className="pt-[4px]">
                <MailIcon />
              </span>
              <span className="leading-[17px] tracking-[0.1px]">contact@companyname.com</span>
            </span>
          </div>
        </div>
        <div className="w-[221px] shrink-0">
          <div className="h-[30px] border-b border-[#4c4c4c] text-[10px] leading-[19px]">STAY CONNECTED</div>
          <div className="flex items-start pt-[14px] pl-px">
            <span className="w-[37px]">
              <TwitterIcon />
            </span>
            <span className="w-[33px]">
              <FacebookIcon />
            </span>
            <span className="w-[36px]">
              <PeopleIcon />
            </span>
            <span className="relative w-[36px] text-[#f15a23]">
              <FaVimeoV size={18} />
              <HandCursor place="left-[10px] top-[13px]" />
            </span>
            <span className="w-[34px]">
              <YouTubeIcon />
            </span>
            <span className="text-[#696969]">
              <FaSkype size={18} />
            </span>
          </div>
        </div>
      </div>
    </footer>
  );
}

export default function App() {
  return (
    <div className={`h-[1356px] w-[1260px] overflow-hidden bg-white ${OPEN}`}>
      <Header />
      <CityMap />
      <ContactSection />
      <Footer />
    </div>
  );
}
